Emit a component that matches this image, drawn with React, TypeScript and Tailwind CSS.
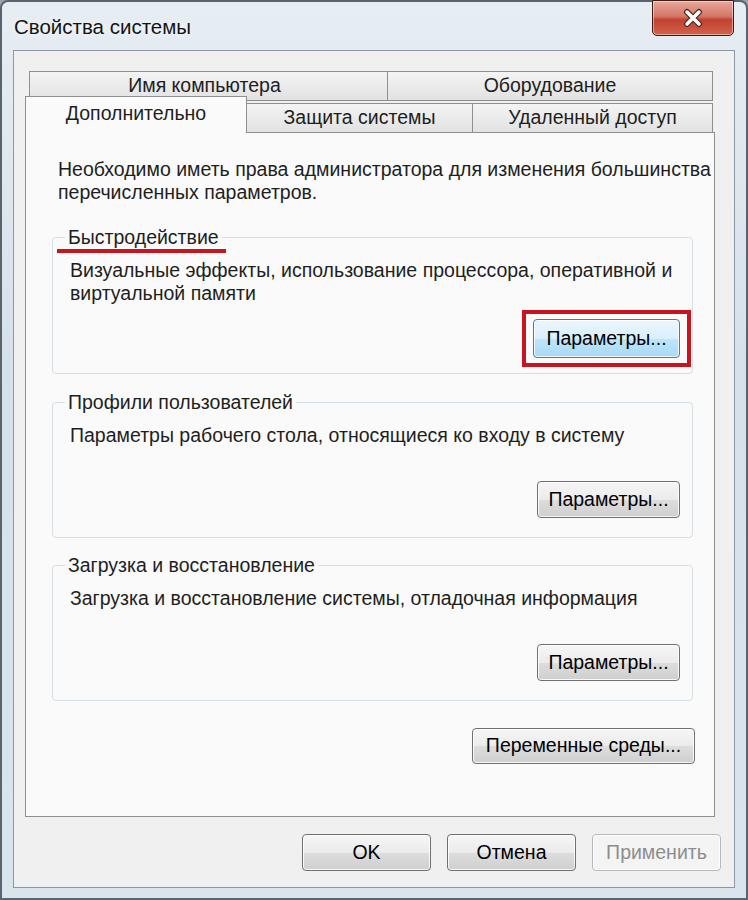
import React from 'react';

const font = { fontFamily: '"Liberation Sans", Arial, sans-serif' };

function WinButton({
  label,
  className = '',
  disabled = false,
  hot = false,
}: {
  label: string;
  className?: string;
  disabled?: boolean;
  hot?: boolean;
}) {
  const skin = disabled
    ? 'border-[#b5b9bc] bg-[#f4f4f4] text-[#8d8d8d]'
    : hot
      ? 'border-[#3c7fb1] bg-[linear-gradient(#eaf6fd_0%,#d9f0fc_50%,#bee6fd_51%,#a7d9f5_100%)] text-black'
      : 'border-[#707070] bg-[linear-gradient(#f6f6f6_0%,#ebebeb_50%,#dddddd_51%,#cfcfcf_100%)] text-black';
  return (
    <button
      className={`flex items-center justify-center rounded-[4px] border shadow-[inset_0_0_0_1px_rgba(255,255,255,0.85)] text-[19.5px] leading-none ${skin} ${className}`}
    >
      {label}
    </button>
  );
}

function Group({
  title,
  text,
  className = '',
  children,
  marked = false,
}: {
  title: string;
  text: React.ReactNode;
  className?: string;
  children: React.ReactNode;
  marked?: boolean;
}) {
  return (
    <fieldset className={`rounded-[4px] border border-[#d5dfe5] pl-[12px] pr-[12px] ${className}`}>
      <legend className="relative px-[3px] text-[19.5px] leading-[23px] text-[#1e1e1e]">
        {title}
        {/* red annotation stroke under the heading */}
        {marked && <span className="absolute -left-[8px] -right-[4px] top-[23px] h-[4px] bg-[#c8141e]" />}
      </legend>
      <div className="mt-[10px] whitespace-nowrap pl-[5px] text-[19.5px] leading-[23px] text-[#1e1e1e]">{text}</div>
      {children}
    </fieldset>
  );
}

export default function App() {
  return (
    <div style={font} className="w-[748px] h-[900px] overflow-hidden bg-[#9aa3ad]">
      <div className="relative flex h-full flex-col rounded-t-[8px] border-2 border-[#5b646e] bg-[linear-gradient(180deg,#e6edf3_0%,#d7e1ea_40%,#dae4ec_100%)]">
        {/* title bar */}
        <div className="flex h-[48px] shrink-0 items-center pl-[12px] pt-[2px]">
          <span className="text-[20.5px] text-[#141414] [text-shadow:0_0_6px_#ffffff]">Свойства системы</span>
        </div>
        <div className="absolute right-[12px] -top-[2px] flex h-[36px] w-[82px] items-center justify-center rounded-b-[5px] border border-[#3b1c18] bg-[linear-gradient(180deg,#e9a79a_0%,#d47767_45%,#c2412f_55%,#d0634c_100%)] shadow-[inset_0_0_0_1px_rgba(255,255,255,0.45)]">
          <svg width="22" height="20" viewBox="0 0 22 20">
            <path d="M5 4 L17 16 M17 4 L5 16" stroke="#4a2a26" strokeWidth="6" strokeLinecap="round" />
            <path d="M5 4 L17 16 M17 4 L5 16" stroke="#ffffff" strokeWidth="3.5" strokeLinecap="round" />
          </svg>
        </div>

        {/* client area */}
        <div className="mx-[11px] mb-[10px] flex flex-1 flex-col border border-[#8d97a1] bg-[#f0f0f0] px-[11px] pt-[20px]">
          {/* tabs */}
          <div className="flex h-[30px] pl-[4px] pr-[10px]">
            <div className="flex flex-1 items-center justify-center border border-[#8e8f8f] bg-[linear-gradient(#f4f4f4,#e2e2e2)] pr-[8px] text-[19.5px] text-[#1e1e1e]">
              Имя компьютера
            </div>
            <div className="-ml-px flex w-[326px] items-center justify-center border border-[#8e8f8f] bg-[linear-gradient(#f4f4f4,#e2e2e2)] text-[19.5px] text-[#1e1e1e]">
              Оборудование
            </div>
          </div>
          <div className="relative z-10 -mt-[5px] flex h-[37px] items-end pr-[10px]">
            <div className="flex h-[37px] w-[222px] items-center justify-center border border-b-0 border-[#8e8f8f] bg-[#fafafa] pb-[2px] text-[19.5px] text-[#1e1e1e]">
              Дополнительно
            </div>
            <div className="flex h-[30px] w-[226px] items-center justify-center border border-l-0 border-[#8e8f8f] bg-[linear-gradient(#f4f4f4,#e2e2e2)] text-[19.5px] text-[#1e1e1e]">
              Защита системы
            </div>
            <div className="flex h-[30px] flex-1 items-center justify-center border border-l-0 border-[#8e8f8f] bg-[linear-gradient(#f4f4f4,#e2e2e2)] text-[19.5px] text-[#1e1e1e]">
              Удаленный доступ
            </div>
          </div>

          {/* tab page */}
          <div className="-mt-px mr-[8px] flex h-[685px] flex-col border border-[#8e8f8f] bg-[#fafafa] pl-[26px] pr-[21px] pt-[25px]">
            <p className="whitespace-nowrap pl-[6px] text-[19.5px] leading-[23px] text-[#1e1e1e]">
              Необходимо иметь права администратора для изменения большинства
              <br />
              перечисленных параметров.
            </p>

            <Group
              className="mt-[22px] pb-[15px]"
              title="Быстродействие"
              marked
              text={
                <>
                  Визуальные эффекты, использование процессора, оперативной и
                  <br />
                  виртуальной памяти
                </>
              }
            >
              <div className="mt-[14px] flex justify-end">
                <div className="relative">
                  <WinButton hot label="Параметры..." className="h-[39px] w-[147px]" />
                  <span className="pointer-events-none absolute -inset-x-[11px] -inset-y-[9px] border-[4px] border-[#c8141e]" />
                </div>
              </div>
            </Group>

            <Group className="mt-[17px] pb-[19px]" title="Профили пользователей" text="Параметры рабочего стола, относящиеся ко входу в систему">
              <div className="mt-[34px] flex justify-end">
                <WinButton label="Параметры..." className="h-[37px] w-[143px]" />
              </div>
            </Group>

            <Group className="mt-[16px] pb-[19px]" title="Загрузка и восстановление" text="Загрузка и восстановление системы, отладочная информация">
              <div className="mt-[34px] flex justify-end">
                <WinButton label="Параметры..." className="h-[37px] w-[143px]" />
              </div>
            </Group>

            <div className="-mr-[2px] mt-[27px] flex justify-end">
              <WinButton label="Переменные среды..." className="h-[36px] w-[223px]" />
            </div>
          </div>

          {/* dialog buttons */}
          <div className="mt-[17px] flex justify-end gap-[16px] pr-[2px]">
            <WinButton label="OK" className="h-[37px] w-[129px]" />
            <WinButton label="Отмена" className="h-[37px] w-[129px]" />
            <WinButton label="Применить" disabled className="h-[37px] w-[129px]" />
          </div>
        </div>
      </div>
    </div>
  );
}
